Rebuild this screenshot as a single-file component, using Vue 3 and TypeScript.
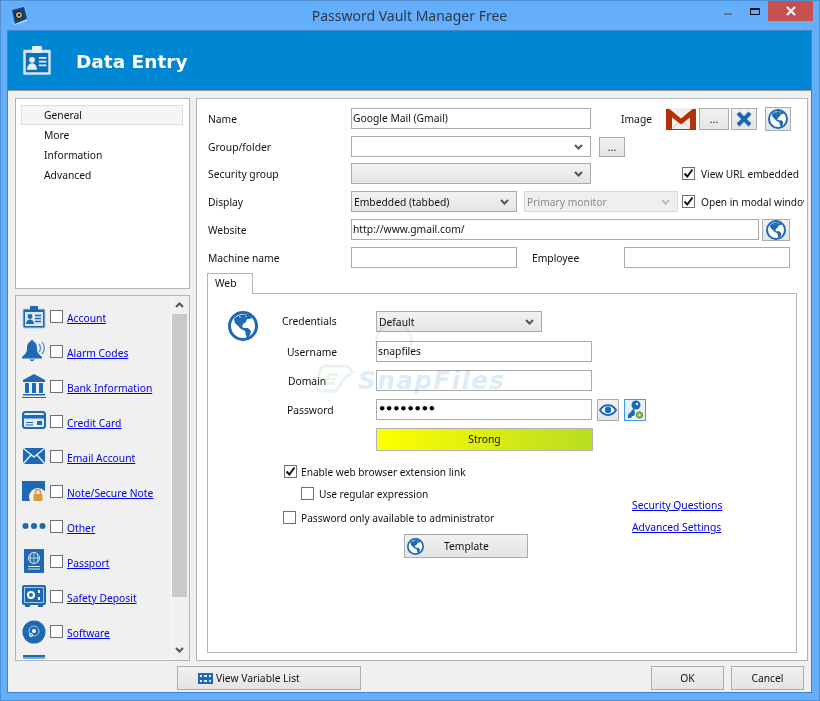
<script setup lang="ts">
interface Item { icon: string; label: string; dy: number }
const items: Item[] = [
  { icon: 'i-account', label: 'Account', dy: 0 },
  { icon: 'i-bell', label: 'Alarm Codes', dy: -1 },
  { icon: 'i-bank', label: 'Bank Information', dy: -2 },
  { icon: 'i-card', label: 'Credit Card', dy: -3 },
  { icon: 'i-mail', label: 'Email Account', dy: -1 },
  { icon: 'i-note', label: 'Note/Secure Note', dy: 0 },
  { icon: 'i-dots', label: 'Other', dy: -2 },
  { icon: 'i-passport', label: 'Passport', dy: -2 },
  { icon: 'i-safe', label: 'Safety Deposit', dy: -2 },
  { icon: 'i-disc', label: 'Software', dy: -1 },
  { icon: 'i-last', label: '', dy: -1 },
]
const tree: string[] = ['General', 'More', 'Information', 'Advanced']
</script>

<template>
  <svg class="defs">
    <symbol id="i-globe" viewBox="0 0 30 30">
      <circle cx="15" cy="15" r="13.500" fill="#fff" stroke="#1d69b3" stroke-width="3" />
      <path d="M6 8C10 3 19 2 24 6l-2 2-3 0-1 3-3 2-1 3 2 1 4 0 3 3-1 4-3 4-1-4-1-4-4-2-4-4-2-2-1-3z" fill="#1d69b3" />
      <path d="M11 5l2 1-1 1zM17 5l2 0-1 1z" fill="#fff" />
    </symbol>
    <symbol id="i-account" viewBox="0 0 24 24">
      <rect x="1" y="3" width="22" height="19" rx="1.500" fill="#1d69b3" stroke="#b8cce0" />
      <rect x="8" y="0" width="8" height="5" fill="#1d69b3" />
      <rect x="3" y="6" width="18" height="14" fill="#dbe6f1" />
      <circle cx="8" cy="10.500" r="2.400" fill="#1d69b3" />
      <path d="M4 18c0-6 8-6 8 0z" fill="#1d69b3" />
      <path d="M13 9.500h6M13 12.500h6M13 15.500h6" stroke="#1d69b3" stroke-width="1.400" />
    </symbol>
    <symbol id="i-bell" viewBox="0 0 24 24">
      <path d="M10 0c-1 0-1.500.5-1.500 1.500C5.500 2.500 5 6 5 9c0 4-3 6-5 8v1.500h20V17c-2-2-5-4-5-8 0-3-.5-6.500-3.500-7.500C11.500.5 11 0 10 0zM7 19.500h6L10 21.500z" fill="#1d69b3" />
      <path d="M17 4c2 2 2 6 0 8M20 2c3 3 3 9 0 12" fill="none" stroke="#6d9ccb" stroke-width="1.600" />
    </symbol>
    <symbol id="i-bank" viewBox="0 0 24 24">
      <path d="M12 0L1 6v2h22V6z" fill="#1d69b3" />
      <path d="M3 9h4v10H3zM10 9h4v10h-4zM17 9h4v10h-4zM1 20h22v1.500H1zM0 23h24v1H0z" fill="#1d69b3" />
    </symbol>
    <symbol id="i-card" viewBox="0 0 24 24">
      <rect x="1" y="4" width="22" height="16" rx="2.500" fill="#e5edf5" stroke="#1d69b3" stroke-width="2" />
      <rect x="1" y="7" width="22" height="3.500" fill="#1d69b3" />
      <rect x="15" y="13" width="5" height="4" fill="#1d69b3" />
      <path d="M4 14.500h7M4 17h7" stroke="#1d69b3" />
    </symbol>
    <symbol id="i-mail" viewBox="0 0 24 24">
      <rect x="1" y="3" width="22" height="16" fill="#1d69b3" />
      <path d="M1 3l11 9 11-9M1 19l8-9M23 19l-8-9" fill="none" stroke="#e6eef6" stroke-width="1.400" />
    </symbol>
    <symbol id="i-note" viewBox="0 0 24 24">
      <path d="M0 0h23v20H0z" fill="#1d69b3" />
      <circle cx="16" cy="16" r="9" fill="#f0f0f0" />
      <rect x="11.500" y="13" width="9" height="7" rx="1" fill="#d99a3a" />
      <path d="M13.500 13v-2a2.500 2.500 0 0 1 5 0v2" fill="none" stroke="#d99a3a" stroke-width="1.600" />
    </symbol>
    <symbol id="i-dots" viewBox="0 0 24 24">
      <circle cx="3.500" cy="12" r="3" fill="#1d69b3" />
      <circle cx="12" cy="12" r="3" fill="#1d69b3" />
      <circle cx="20.500" cy="12" r="3" fill="#1d69b3" />
    </symbol>
    <symbol id="i-passport" viewBox="0 0 24 24">
      <rect x="2" y="0" width="20" height="24" rx="1" fill="#1d69b3" />
      <circle cx="12" cy="9" r="5.500" fill="none" stroke="#dbe6f1" />
      <path d="M6.500 9h11M12 3.500v11M9 4.500c-1 3-1 6 0 9M15 4.500c1 3 1 6 0 9" fill="none" stroke="#dbe6f1" stroke-width=".8" />
      <path d="M6 17.500h12M6 20h12" stroke="#dbe6f1" />
    </symbol>
    <symbol id="i-safe" viewBox="0 0 24 24">
      <rect x="0" y="1" width="24" height="20" rx="2" fill="#1d69b3" />
      <rect x="2.500" y="3.500" width="19" height="15" fill="#1d69b3" stroke="#a9c6e2" />
      <circle cx="9" cy="11" r="3" fill="none" stroke="#fff" stroke-width="2" />
      <path d="M17 6v3M17 13v3" stroke="#fff" stroke-width="2" />
      <path d="M3 21h5v2H3zM16 21h5v2h-5z" fill="#1d69b3" />
    </symbol>
    <symbol id="i-disc" viewBox="0 0 24 24">
      <circle cx="12" cy="12" r="11.500" fill="#1d69b3" />
      <circle cx="12" cy="11" r="5" fill="none" stroke="#a9c6e2" />
      <circle cx="12" cy="11" r="2" fill="#fff" />
      <circle cx="9" cy="15" r="1.500" fill="none" stroke="#fff" />
    </symbol>
    <symbol id="i-last" viewBox="0 0 24 24">
      <rect x="1" y="0" width="22" height="24" fill="#7fa9d2" />
      <rect x="1" y="0" width="22" height="2" fill="#1d69b3" />
      <rect x="1" y="4" width="22" height="1" fill="#1d69b3" />
    </symbol>
  </svg>

  <div class="window">
    <div class="titlebar">
      <svg class="app-icon" width="16" height="18" viewBox="0 0 16 18">
        <path d="M1 3l12-3 3 12-12 5z" fill="#17417c" />
        <path d="M0 14l4 3 12-5v2L4 18z" fill="#c3cfe0" />
        <circle cx="8" cy="8" r="3.600" fill="#c9b27a" stroke="#111" />
        <circle cx="8" cy="8" r="1.300" fill="#222" />
      </svg>
      <span class="title">Password Vault Manager Free</span>
      <span class="ctl-min"></span>
      <span class="ctl-max"></span>
      <span class="ctl-close">
        <svg width="10" height="10" viewBox="0 0 10 10"><path d="M1 1l8 8M9 1l-8 8" stroke="#fff" stroke-width="2" /></svg>
      </span>
    </div>

    <div class="client">
      <div class="banner">
        <svg width="32" height="30" viewBox="0 0 24 24" class="banner-icon">
          <rect x="1" y="3" width="22" height="20" rx="1" fill="#d9e3f7" />
          <rect x="3" y="5.500" width="18" height="15.500" fill="#0a70b8" />
          <rect x="8" y="0" width="8" height="5.500" rx="1" fill="#e8effa" />
          <circle cx="8" cy="11" r="2.300" fill="#e4edf8" />
          <path d="M4 19c0-7 8-7 8 0z" fill="#e4edf8" />
          <path d="M13.500 9.500h6M13.500 12.500h6M13.500 15.500h6" stroke="#e4edf8" stroke-width="1.300" />
        </svg>
        <span class="banner-title">Data Entry</span>
      </div>

      <div class="main">
        <div class="left">
          <div class="tree">
            <div v-for="(t, i) in tree" :key="t" class="tree-item" :class="{ sel: i === 0 }">{{ t }}</div>
          </div>
          <div class="list-box">
            <div class="list">
              <div v-for="it in items" :key="it.icon" class="list-item">
                <svg width="24" height="24" :style="{ marginTop: it.dy + 'px' }"><use :href="'#' + it.icon" /></svg>
                <template v-if="it.label">
                  <span class="cb"></span>
                  <a class="link">{{ it.label }}</a>
                </template>
              </div>
            </div>
            <div class="scroll">
              <div class="arrow">
                <svg width="9" height="6" viewBox="0 0 9 6"><path d="M1 5l3.500-3.500L8 5" fill="none" stroke="#555" stroke-width="2" /></svg>
              </div>
              <div class="thumb"></div>
              <div class="arrow low">
                <svg width="9" height="6" viewBox="0 0 9 6"><path d="M1 1l3.500 3.500L8 1" fill="none" stroke="#555" stroke-width="2" /></svg>
              </div>
            </div>
          </div>
        </div>

        <div class="panel">
          <div class="row">
            <label class="lbl">Name</label>
            <div class="input w240">Google Mail (Gmail)</div>
            <label class="image-lbl">Image</label>
            <svg class="gmail" width="30" height="22" viewBox="0 0 30 22">
              <rect x="0" y="0" width="30" height="22" fill="#f6eeec" />
              <path d="M5 22l8-9M25 22l-8-9" stroke="#d8c0b8" />
              <path d="M0 1h3.500L15 10.500 26.500 1H30v21h-6V9.500L15 16.500 6 9.500V22H0z" fill="#b5310a" />
              <rect x="0" y="21" width="30" height="1" fill="#b5310a" />
            </svg>
            <button class="btn dots w30">...</button>
            <button class="btn x-btn">
              <svg width="16" height="16" viewBox="0 0 16 16"><path d="M2 2l12 12M14 2L2 14" stroke="#1d69b3" stroke-width="4" /></svg>
            </button>
            <button class="btn globe-btn g1"><svg width="20" height="20"><use href="#i-globe" /></svg></button>
          </div>
          <div class="row tight">
            <label class="lbl">Group/folder</label>
            <div class="select white w240">
              <svg width="9" height="6" viewBox="0 0 9 6"><path d="M1 1l3.500 3.500L8 1" fill="none" stroke="#555" stroke-width="2" /></svg>
            </div>
            <button class="btn dots w26">...</button>
          </div>
          <div class="row">
            <label class="lbl">Security group</label>
            <div class="select w240">
              <svg width="9" height="6" viewBox="0 0 9 6"><path d="M1 1l3.500 3.500L8 1" fill="none" stroke="#555" stroke-width="2" /></svg>
            </div>
            <span class="cb checked ml91">
              <svg width="11" height="11" viewBox="0 0 11 11"><path d="M1.500 5.500L4.300 8.500 9.500 1.500" fill="none" stroke="#111" stroke-width="2" /></svg>
            </span>
            <span class="check-text top">View URL embedded</span>
          </div>
          <div class="row">
            <label class="lbl">Display</label>
            <div class="select w166">
              <span>Embedded (tabbed)</span>
              <svg width="9" height="6" viewBox="0 0 9 6"><path d="M1 1l3.500 3.500L8 1" fill="none" stroke="#555" stroke-width="2" /></svg>
            </div>
            <div class="select disabled">
              <span>Primary monitor</span>
              <svg width="9" height="6" viewBox="0 0 9 6"><path d="M1 1l3.500 3.500L8 1" fill="none" stroke="#bbb" stroke-width="2" /></svg>
            </div>
            <span class="cb checked ml4">
              <svg width="11" height="11" viewBox="0 0 11 11"><path d="M1.500 5.500L4.300 8.500 9.500 1.500" fill="none" stroke="#111" stroke-width="2" /></svg>
            </span>
            <span class="check-text top clip">Open in modal window</span>
          </div>
          <div class="row">
            <label class="lbl">Website</label>
            <div class="input w408">http://www.gmail.com/</div>
            <button class="btn globe-btn g2"><svg width="20" height="20"><use href="#i-globe" /></svg></button>
          </div>
          <div class="row">
            <label class="lbl">Machine name</label>
            <div class="input w166"></div>
            <label class="emp-lbl">Employee</label>
            <div class="input w166"></div>
          </div>

          <div class="tab">Web</div>
          <div class="tab-body">
            <div class="watermark">
              <svg class="wm-logo" width="38" height="30" viewBox="0 0 38 30">
                <path d="M9 2h20c3 0 5 1 7 6l-8 7-8 12H6c-4 0-6-3-5-7l3-13c1-3 2-5 5-5z" fill="none" stroke="#e8f6e8" stroke-width="3" />
                <path d="M12 9h10l-1 3h-7l-1 2h7l-2 7H9l1-3h6l1-2h-7z" fill="#e8f6e8" />
              </svg>
              <span class="wm-text">SnapFiles</span>
            </div>
            <div class="wm-copy"></div>
            <div class="f-row first">
              <svg class="big-globe" width="30" height="30"><use href="#i-globe" /></svg>
              <label class="cred-lbl">Credentials</label>
              <div class="select w166">
                <span>Default</span>
                <svg width="9" height="6" viewBox="0 0 9 6"><path d="M1 1l3.500 3.500L8 1" fill="none" stroke="#555" stroke-width="2" /></svg>
              </div>
            </div>
            <div class="f-row m9">
              <label class="f-lbl pl79">Username</label>
              <div class="input w216">snapfiles</div>
            </div>
            <div class="f-row m8">
              <label class="f-lbl pl80">Domain</label>
              <div class="input w216"></div>
            </div>
            <div class="f-row m8">
              <label class="f-lbl pl79">Password</label>
              <div class="input w216 pw">••••••••</div>
              <button class="btn icon-btn eye">
                <svg width="18" height="14" viewBox="0 0 18 14">
                  <path d="M1 7c4-6.500 12-6.500 16 0-4 6.500-12 6.500-16 0z" fill="#fff" stroke="#1d69b3" stroke-width="2" />
                  <circle cx="9" cy="7" r="3.200" fill="#1d69b3" />
                </svg>
              </button>
              <button class="btn icon-btn key">
                <svg width="18" height="20" viewBox="0 0 18 20">
                  <circle cx="10" cy="5" r="4.500" fill="#1d69b3" />
                  <circle cx="11" cy="4" r="1.200" fill="#e5f1fb" />
                  <path d="M8 8L2 15v3h3l1-2h2l1-2" fill="#1d69b3" />
                  <circle cx="13.500" cy="15" r="3.200" fill="#8fbf3f" stroke="#5e8f24" />
                  <circle cx="13.500" cy="15" r="1" fill="#e5f1fb" />
                </svg>
              </button>
            </div>
            <div class="strength"><span>Strong</span></div>
            <div class="lower">
              <div class="checks">
                <div class="c-row">
                  <span class="cb checked">
                    <svg width="11" height="11" viewBox="0 0 11 11"><path d="M1.500 5.500L4.300 8.500 9.500 1.500" fill="none" stroke="#111" stroke-width="2" /></svg>
                  </span>
                  <span class="check-text">Enable web browser extension link</span>
                </div>
                <div class="c-row nested">
                  <span class="cb"></span>
                  <span class="check-text">Use regular expression</span>
                </div>
                <div class="c-row last">
                  <span class="cb"></span>
                  <span class="check-text">Password only available to administrator</span>
                </div>
              </div>
              <div class="links">
                <a class="link">Security Questions</a>
                <a class="link">Advanced Settings</a>
              </div>
            </div>
            <button class="btn template">
              <svg width="17" height="17"><use href="#i-globe" /></svg>
              <span>Template</span>
            </button>
          </div>
        </div>
      </div>

      <div class="footer">
        <button class="btn var-btn">
          <svg width="15" height="11" viewBox="0 0 15 11">
            <rect width="15" height="11" fill="#1d69b3" />
            <path d="M2 2h2v2H2zM6 2h3v2H6zM11 2h2v2h-2zM2 7h2v2H2zM6 7h3v2H6zM11 7h2v2h-2z" fill="#dbe6f1" />
          </svg>
          <span>View Variable List</span>
        </button>
        <button class="btn foot ok">OK</button>
        <button class="btn foot">Cancel</button>
      </div>
    </div>
  </div>
</template>

<style>
html, body { margin: 0; padding: 0; background: #64aefc; }
</style>

<style scoped>
.defs { display: none; }
.window {
  width: 820px; height: 701px; box-sizing: border-box;
  background: #64aefc; border: 1px solid #4d8fd0;
  padding: 0 7px 7px 6px; display: flex; flex-direction: column;
  font-family: "Noto Sans", "Liberation Sans", sans-serif; font-size: 10.3px; color: #111;
  overflow: hidden;
}
.titlebar { height: 29px; flex: none; display: flex; align-items: flex-start; position: relative; }
.app-icon { margin: 6px 0 0 4px; }
.title {
  position: absolute; left: 0; right: 0; top: 5px; text-align: center;
  font-size: 14px; line-height: 20px; color: #2b3a4a;
}
.ctl-min { position: absolute; left: 717px; top: 12px; width: 8px; height: 2px; background: #5f7a99; }
.ctl-max { position: absolute; left: 743px; top: 7px; width: 8px; height: 4px; border: 1px solid #111; border-top-width: 2px; box-sizing: content-box; }
.ctl-close {
  position: absolute; left: 761px; top: 0; width: 45px; height: 20px; background: #c75050;
  display: flex; align-items: center; justify-content: center;
}
.client { flex: 1; min-height: 0; background: #f0f0f0; border: 1px solid #3f86c9; display: flex; flex-direction: column; }
.banner { height: 59px; flex: none; background: #0087d3; border-bottom: 1px solid #9a9a9a; display: flex; align-items: center; }
.banner-icon { margin-left: 13px; }
.banner-title { margin: 2px 0 0 23px; font-family: "DejaVu Sans", sans-serif; font-weight: 700; font-size: 18.500px; color: #fff; }
.main { flex: 1; min-height: 0; display: flex; gap: 6px; padding: 7px 3px 0 7px; }
.left { width: 175px; flex: none; display: flex; flex-direction: column; gap: 6px; }
.tree { height: 191px; box-sizing: border-box; background: #fff; border: 1px solid #b4b4b4; padding: 6px 6px 0 5px; }
.tree-item { height: 20px; line-height: 20px; padding-left: 23px; box-sizing: border-box; }
.tree-item.sel { background: #f5f5f5; border: 1px solid #dcdcdc; padding-left: 22px; line-height: 18px; }
.list-box { flex: 1; min-height: 0; border: 1px solid #b4b4b4; background: #f0f0f0; display: flex; overflow: hidden; }
.list { flex: 1; min-width: 0; padding: 10px 0 0 6px; overflow: hidden; border-right: 1px solid #fbfbfb; border-bottom: 1px solid #fbfbfb; }
.list-item { height: 35px; display: flex; align-items: flex-start; }
.list-item svg { flex: none; }
.list-item .cb { margin: 4px 0 0 4px; }
.list-item .link { margin: 4px 0 0 4px; line-height: 16px; }
.cb {
  width: 13px; height: 13px; box-sizing: border-box; border: 1px solid #707070; background: #fff;
  flex: none; display: inline-flex; align-items: center; justify-content: center;
}
.link { color: #0000ee; text-decoration: underline; white-space: nowrap; cursor: pointer; }
.scroll { width: 15px; flex: none; margin-right: 2px; display: flex; flex-direction: column; }
.arrow { height: 18px; display: flex; align-items: center; justify-content: center; }
.thumb { height: 283px; background: #c9c9c9; flex: none; }
.arrow.low { margin-top: auto; height: 18px; padding-bottom: 3px; box-sizing: border-box; }
.panel { flex: 1; min-width: 0; box-sizing: border-box; background: #fff; border: 1px solid #b4b4b4; padding: 9px 0 0 10px; overflow: hidden; }
.row { height: 21px; margin-bottom: 7px; padding-left: 1px; display: flex; align-items: center; }
.row.tight { margin-bottom: 6px; }
.lbl { width: 143px; flex: none; }
.input, .select {
  box-sizing: border-box; height: 21px; border: 1px solid #ababab; background: #fff; flex: none;
  line-height: 19px; padding-left: 1px; white-space: nowrap; overflow: hidden;
}
.w240 { width: 240px; }
.w408 { width: 408px; }
.w166 { width: 166px; }
.w216 { width: 216px; }
.select {
  display: flex; align-items: center; justify-content: space-between; padding: 0 7px 0 2px;
  background: linear-gradient(#f2f2f2, #e5e5e5);
}
.select span { margin-top: 2px; }
.select svg { margin-left: auto; }
.select.white { background: #fff; }
.select.disabled { width: 154px; margin-left: 7px; background: #efefef; border-color: #d9d9d9; color: #808c95; }
.image-lbl { margin-left: 30px; width: 45px; flex: none; }
.gmail { flex: none; }
.btn {
  box-sizing: border-box; border: 1px solid #acacac; background: linear-gradient(#f1f1f1, #e4e4e4);
  font: inherit; color: #111; padding: 0; flex: none; display: inline-flex; align-items: center; justify-content: center;
}
.dots { color: #000078; height: 21px; line-height: 14px; }
.w30 { width: 30px; margin-left: 3px; height: 22px; }
.w26 { width: 26px; margin-left: 8px; height: 20px; }
.x-btn { width: 26px; height: 22px; margin-left: 2px; }
.globe-btn { width: 26px; height: 24px; }
.g1 { margin-left: 8px; }
.g2 { margin-left: 3px; width: 28px; height: 22px; }
.ml91 { margin-left: 91px; }
.ml4 { margin-left: 4px; }
.check-text { margin-left: 4px; white-space: nowrap; font-size: 10.15px; }
.check-text.top { margin-left: 6px; }
.check-text.clip { width: 103px; overflow: hidden; flex: none; }
.emp-lbl { width: 107px; padding-left: 15px; box-sizing: border-box; flex: none; }
.tab {
  width: 46px; height: 21px; box-sizing: border-box; margin-top: -2px; background: #fff; border: 1px solid #b4b4b4; border-bottom: 0;
  line-height: 18px; padding-left: 7px; position: relative; z-index: 1;
}
.tab-body {
  width: 590px; height: 360px; box-sizing: border-box; margin-top: -1px; border: 1px solid #b4b4b4;
  padding-top: 17px; position: relative;
}
.f-row { display: flex; align-items: center; height: 21px; }
.m9 { margin-top: 9px; }
.m8 { margin-top: 8px; }
.big-globe { margin-left: 20px; align-self: flex-start; flex: none; }
.cred-lbl { margin-left: 24px; width: 94px; flex: none; margin-top: -2px; }
.f-lbl { width: 168px; box-sizing: border-box; flex: none; }
.pl79 { padding-left: 79px; }
.pl80 { padding-left: 80px; }
.pw { font-size: 13px; font-weight: 700; letter-spacing: -1.2px; color: #000; font-family: "DejaVu Sans", sans-serif; line-height: 18px; }
.icon-btn { width: 22px; height: 22px; }
.eye { margin-left: 5px; }
.key { margin-left: 5px; border-color: #3d9bef; background: #e5f1fb; }
.strength {
  width: 217px; height: 23px; box-sizing: border-box; margin: 8px 0 0 168px; border: 1px solid #b4b4b4;
  background: linear-gradient(90deg, #ffff00, #b9dc22); text-align: center; line-height: 20px;
}
.lower { display: flex; margin-top: 14px; height: 69px; }
.checks { width: 424px; flex: none; }
.c-row { display: flex; align-items: center; height: 13px; padding-left: 76px; }
.c-row.nested { margin-top: 9px; padding-left: 93px; }
.c-row.nested .check-text { margin-left: 5px; }
.c-row.last { margin-top: 11px; padding-left: 75px; }
.c-row.last .check-text { margin-left: 5px; }
.links { padding-top: 33px; display: flex; flex-direction: column; gap: 7px; }
.links .link { line-height: 15px; }
.template { display: flex; width: 124px; height: 24px; margin-left: 196px; justify-content: flex-start; padding-left: 2px; }
.template span { margin-left: 20px; }
.watermark { position: absolute; left: 108px; top: 69px; display: flex; align-items: center; gap: 4px; pointer-events: none; z-index: 2; mix-blend-mode: multiply; }
.wm-text { font-family: "DejaVu Sans", sans-serif; font-weight: 700; font-style: italic; font-size: 25px; letter-spacing: 1.2px; color: #dcedf8; margin-top: 3px; }
.wm-copy {
  position: absolute; left: 167px; top: 28px; width: 38px; height: 38px; border: 3px solid #f2f2f2; border-radius: 50%;
  box-sizing: border-box; mix-blend-mode: multiply; pointer-events: none; z-index: 2;
}
.footer { height: 31px; box-sizing: border-box; flex: none; display: flex; align-items: flex-start; padding: 5px 7px 0 169px; }
.var-btn { width: 184px; height: 24px; justify-content: flex-start; padding-left: 20px; }
.var-btn span { margin-left: 3px; }
.foot { width: 73px; height: 24px; margin-left: 7px; }
.foot.ok { margin-left: auto; }
</style>
